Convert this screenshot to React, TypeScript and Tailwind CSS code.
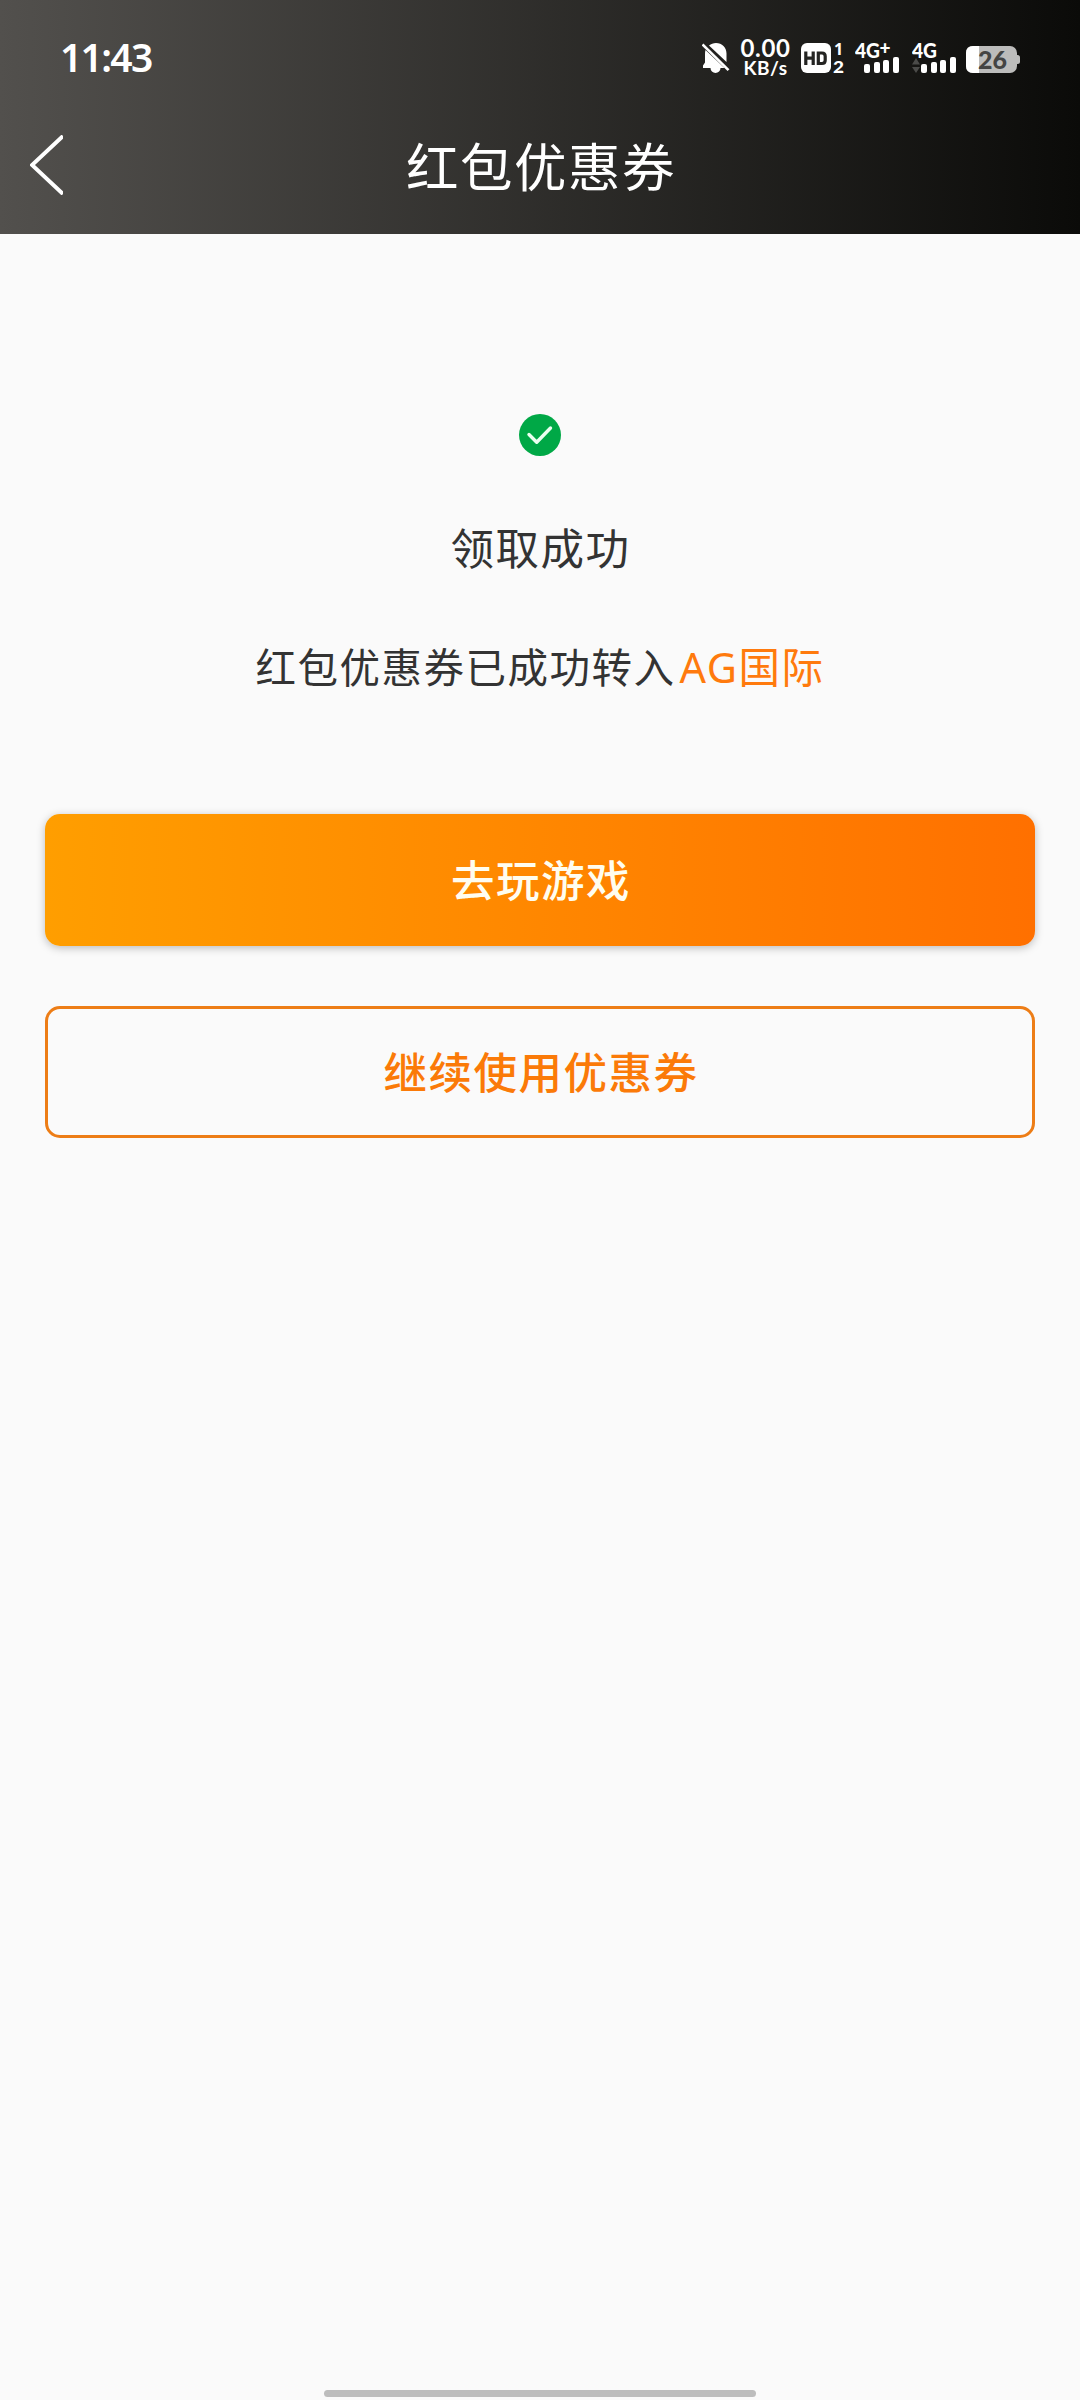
import React from "react";

const SIGNAL_BARS = [
  { x: 9, height: 9 },
  { x: 19, height: 11 },
  { x: 28, height: 13 },
  { x: 38, height: 16 },
];

const BellOffIcon: React.FC = () => (
  <svg className="h-[31px] w-[28px]" viewBox="0 0 28 31" fill="none">
    <path
      d="M7 2.600C9 .9 11.300 0 14 0c6 0 10.500 4.500 10.500 10.500v8.500zM3.500 7 22.500 25H18.500a5 5 0 0 1-10 0H1v-2.500l2-3V11c0-1.500.1-2.800.5-4z"
      fill="#fff"
    />
    <path d="M.5 1.500 26.500 27.200" stroke="#fff" strokeWidth="2.600" />
  </svg>
);

const HdIcon: React.FC = () => (
  <svg
    className="-mt-[8px] h-[50px] w-[44px] font-['Lato',sans-serif] font-black"
    viewBox="0 -8 44 50"
  >
    <rect y="1" width="30" height="30" rx="6" fill="#fff" />
    <path
      d="M4.800 9.500v13.500M12.200 9.500v13.500M4.800 16.200h7.400M17.300 11h3.700q3.200 0 3.200 3.200v4q0 3.300-3.200 3.300h-3.700z"
      fill="none"
      stroke="#242422"
      strokeWidth="3.200"
    />
    <text
      x="33"
      y="13"
      fontSize="16"
      fill="#fff"
      className="font-['Noto_Sans',sans-serif] font-bold"
    >
      1
    </text>
    <text
      x="32"
      y="31"
      fontSize="17"
      textLength="11"
      lengthAdjust="spacingAndGlyphs"
      fill="#fff"
    >
      2
    </text>
  </svg>
);

const SignalIcon: React.FC<{
  plus?: boolean;
  arrows?: boolean;
}> = ({ plus, arrows }) => (
  <svg
    className="-mt-[10px] h-[44px] w-[46px] font-['Lato',sans-serif] font-black"
    viewBox="0 -10 46 44"
    fill="#fff"
  >
    <text
      x="0"
      y="15.500"
      fontSize="20.500"
      textLength="25"
      lengthAdjust="spacingAndGlyphs"
    >
      4G
    </text>
    {plus && (
      <text x="24.500" y="12.500" fontSize="19">
        +
      </text>
    )}
    {SIGNAL_BARS.map((bar) => (
      <rect
        key={bar.x}
        x={bar.x}
        y={31 - bar.height}
        width="6"
        height={bar.height}
        rx="2"
      />
    ))}
    {arrows && <path d="M0 22.500 4 16l4 6.500zM0 25h8l-4 6z" fill="#4b4b49" />}
  </svg>
);

const BatteryIcon: React.FC = () => (
  <svg
    className="-mt-[5px] h-[38px] w-[54px] font-['Lato',sans-serif] font-black"
    viewBox="0 -5 54 38"
  >
    <rect width="51" height="27" rx="7" fill="#bcbcbb" />
    <path
      d="M50 9h1.500q2.500 0 2.500 2.500v4q0 2.500-2.500 2.500H50z"
      fill="#bcbcbb"
    />
    <path d="M7 0h6v27H7q-7 0-7-7V7q0-7 7-7z" fill="#fff" />
    <text
      x="12"
      y="23"
      fontSize="25"
      textLength="29"
      lengthAdjust="spacingAndGlyphs"
      fill="#444443"
    >
      26
    </text>
  </svg>
);

const StatusBar: React.FC = () => (
  <div className="flex h-[96px] items-start pr-[60px] pl-[60px] text-white">
    <div className="mt-[30px] font-['Noto_Sans',sans-serif] text-[39px] leading-[54px] font-semibold tracking-[-1.700px]">
      11:43
    </div>
    <div className="ml-auto flex pt-[42px]">
      <div className="mt-px mr-[10px]">
        <BellOffIcon />
      </div>
      <div className="-mt-[5px] mr-[10px] flex w-[51px] flex-col items-center font-['Lato',sans-serif] font-bold whitespace-nowrap">
        <span className="text-[24px] leading-[22px] tracking-[0.600px]">
          0.00
        </span>
        <span className="text-[19px] leading-[18px] tracking-[0.500px]">
          KB/s
        </span>
      </div>
      <div className="mr-[10px]">
        <HdIcon />
      </div>
      <div className="mr-[11px]">
        <SignalIcon plus />
      </div>
      <div className="mr-[8px]">
        <SignalIcon arrows />
      </div>
      <div className="mt-[4px]">
        <BatteryIcon />
      </div>
    </div>
  </div>
);

const TitleBar: React.FC = () => (
  <div className="grid h-[138px] grid-cols-[1fr_auto_1fr] items-center text-white">
    <button className="ml-[30px] h-[60px] w-[33px]">
      <svg viewBox="0 0 33 60" className="h-[60px] w-[33px]" fill="none">
        <path d="M33 1 2 30l31 29" stroke="#fff" strokeWidth="4" />
      </svg>
    </button>
    <h1 className="pb-[2px] pl-[2px] text-[52.500px] leading-[60px] font-normal tracking-[1.500px]">
      红包优惠券
    </h1>
  </div>
);

export default function App() {
  return (
    <div className="flex h-[2400px] w-[1080px] flex-col bg-[#fafafa] font-['Noto_Sans_CJK_SC',sans-serif]">
      <header className="h-[234px] bg-linear-to-r/srgb from-[#52504d] to-[#0b0b09]">
        <StatusBar />
        <TitleBar />
      </header>

      <main className="flex flex-1 flex-col items-center px-[45px] pt-[180px] text-[#333]">
        <svg className="h-[42px] w-[42px]" viewBox="0 0 42 42" fill="none">
          <circle cx="21" cy="21" r="21" fill="#00a846" />
          <path
            d="m10 20.500 7.700 7.700L31.500 14"
            stroke="#eafff0"
            strokeWidth="3.400"
            strokeLinecap="round"
            strokeLinejoin="round"
          />
        </svg>
        <p className="mt-[61px] h-[60px] pl-px text-[43.500px] leading-[60px] tracking-[1.500px]">
          领取成功
        </p>
        <p className="mt-[59px] flex h-[60px] items-baseline text-[40.500px] leading-[60px] tracking-[1.500px]">
          <span>红包优惠券已成功转入</span>
          <span className="ml-[4px] font-['Noto_Sans','Noto_Sans_CJK_SC',sans-serif] text-[41.500px] text-[#ff7a0d]">
            AG国际
          </span>
        </p>
        <button className="mt-[118px] h-[132px] w-full rounded-[15px] bg-linear-to-r/srgb from-[#ff9e00] to-[#ff7000] pb-[2px] pl-[2px] text-[43.500px] font-medium tracking-[1.500px] text-[#fffdf0] shadow-[0_2px_8px_rgba(0,0,0,0.25)]">
          去玩游戏
        </button>
        <button className="mt-[60px] h-[132px] w-full rounded-[15px] border-3 border-[#ed7d16] pb-[2px] pl-[2px] text-[43.500px] font-medium tracking-[1.500px] text-[#fb7a08]">
          继续使用优惠券
        </button>
      </main>

      <div className="mx-auto mb-[3px] h-[7px] w-[432px] rounded-full bg-[#bdbdbd]" />
    </div>
  );
}
